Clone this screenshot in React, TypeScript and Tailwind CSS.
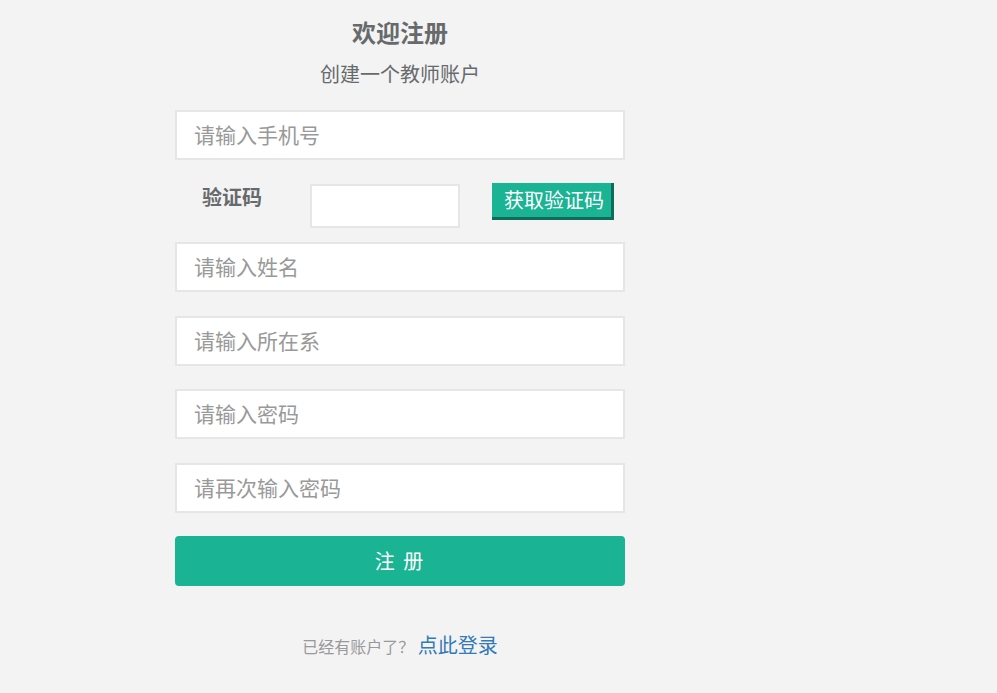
import React from "react";

const font = { fontFamily: '"Microsoft YaHei", "Noto Sans CJK SC", "Noto Sans", sans-serif' };

function Field({ placeholder }: { placeholder: string }) {
  return (
    <input
      type="text"
      placeholder={placeholder}
      className="block w-[450px] h-[50px] border-2 border-[#e5e6e7] bg-white pl-[17px] pb-[3px] text-[21px] text-[#676a6c] placeholder:text-[#999999] outline-none"
      style={font}
    />
  );
}

export default function App() {
  return (
    <div className="min-h-[693px] w-full bg-[#f3f3f3]" style={font}>
      <div className="ml-[175px] w-[450px] pt-[15px]">
        <h1 className="text-center text-[24px] leading-[34px] font-bold text-[#676a6c]">欢迎注册</h1>
        <p className="mt-[11px] text-center text-[20px] leading-[28px] text-[#676a6c]">创建一个教师账户</p>

        <div className="mt-[22px]">
          <Field placeholder="请输入手机号" />
        </div>

        <div className="mt-[24px] flex items-start">
          <label className="ml-[27px] w-[108px] text-[20px] leading-[26px] font-bold text-[#676a6c]">验证码</label>
          <input
            type="text"
            className="block w-[150px] h-[44px] border-2 border-[#e5e6e7] bg-white outline-none"
          />
          <button
            type="button"
            className="-mt-px ml-[32px] h-[37px] w-[122px] border-r-[3px] border-b-[3px] border-[#0e6d5a] bg-[#1ab394] pl-[12px] text-left text-[20px] leading-[34px] text-white"
            style={font}
          >
            获取验证码
          </button>
        </div>

        <div className="mt-[14px] flex flex-col gap-[24px]">
          <Field placeholder="请输入姓名" />
          <Field placeholder="请输入所在系" />
          <div className="-mt-px"><Field placeholder="请输入密码" /></div>
          <Field placeholder="请再次输入密码" />
        </div>

        <button
          type="button"
          className="mt-[23px] block h-[50px] w-[450px] rounded-[4px] bg-[#1ab394] text-[20px] text-white tracking-[2px]"
          style={font}
        >
          注 册
        </button>

        <p className="mt-[46px] text-center leading-[26px]">
          <span className="text-[16px] text-[#999999]">已经有账户了？ </span>
          <a href="#" className="text-[20px] text-[#337ab7]">点此登录</a>
        </p>
      </div>
    </div>
  );
}
